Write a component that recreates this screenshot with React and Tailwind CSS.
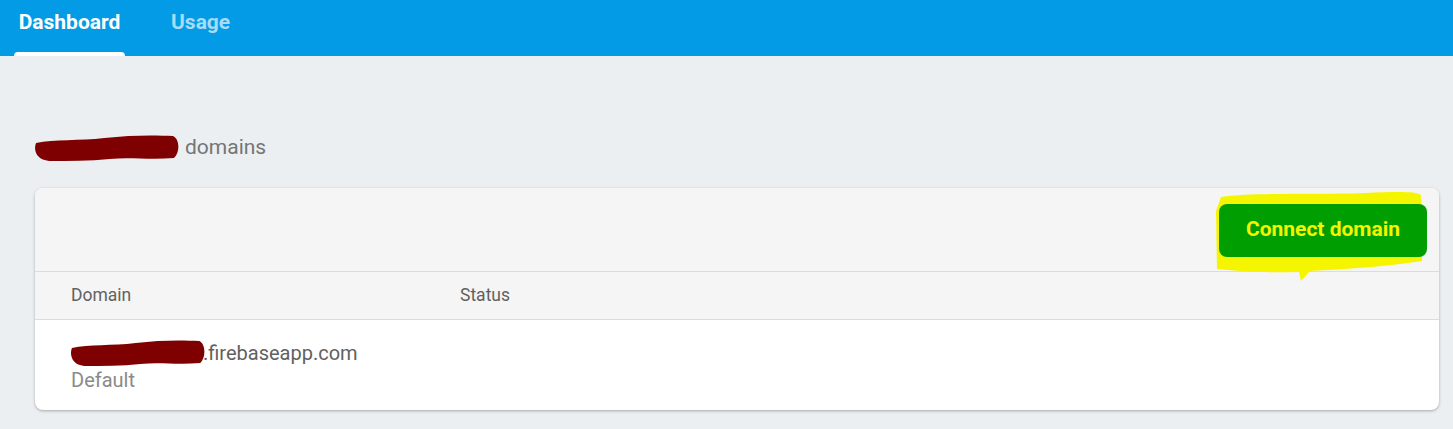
import React from 'react';

function Scribble({ className }) {
  return (
    <svg className={className} viewBox="0 0 144 26" preserveAspectRatio="none" aria-hidden="true">
      <path
        d="M2 8 C 20 4, 45 6, 70 3 C 95 0, 120 0, 138 1 C 145 4, 145 18, 139 23 C 115 25, 95 22, 75 24 C 55 26, 35 26, 15 26 C 3 25, -1 16, 2 8 Z"
        fill="#7f0000"
      />
    </svg>
  );
}

export default function App() {
  return (
    <div className="min-h-screen bg-[#eceff1] font-['Roboto',sans-serif]">
      <header className="flex h-14 items-end bg-[#039be5] px-[14px]">
        <div className="relative flex h-14 w-[111px] items-center justify-center">
          <span className="-mt-[11px] text-[21px] font-bold text-white">Dashboard</span>
          <div className="absolute bottom-0 left-0 h-1 w-full rounded-t bg-white" />
        </div>
        <div className="flex h-14 items-center pl-[46px]">
          <span className="-mt-[11px] text-[21px] font-bold text-[#a6dcf7]">Usage</span>
        </div>
      </header>

      <div className="pl-[34px] pt-[76px]">
        <div className="flex items-center">
          <Scribble className="h-[26px] w-[145px]" />
          <span className="ml-[6px] text-[21px] text-[#757575]">domains</span>
        </div>
      </div>

      <section className="ml-[35px] mr-[14px] mt-[24px] overflow-hidden rounded-lg bg-white shadow-[0_1px_3px_rgba(0,0,0,0.3)]">
        <div className="flex h-[84px] items-start justify-end border-b border-[#dcdcdc] bg-[#f5f5f5] pr-3 pt-4">
          <div className="relative">
            <svg className="absolute -left-[4px] -top-[13px] h-[92px] w-[210px]" viewBox="0 0 210 92" aria-hidden="true">
              <path
                d="M6 6 C 40 1, 100 4, 150 2 C 180 1, 200 0, 206 4 L 207 70 C 170 76, 130 78, 95 80 L 86 90 L 84 81 C 50 82, 20 80, 2 78 L 1 20 Z"
                fill="#f5f500"
              />
            </svg>
            <button className="relative flex h-[53px] w-[208px] items-center justify-center rounded-lg bg-[#009e00] text-[21px] font-bold text-[#f5f500]">
              Connect domain
            </button>
          </div>
        </div>
        <div className="flex h-[48px] items-center border-b border-[#dcdcdc] bg-[#f5f5f5] text-[17.5px] text-[#616161]">
          <div className="w-[425px] pl-9">Domain</div>
          <div>Status</div>
        </div>
        <div className="h-[90px] pl-9 pt-[18px]">
          <div className="flex items-center">
            <Scribble className="-ml-[1px] h-[26px] w-[135px]" />
            <span className="-ml-[2px] text-[20px] text-[#616161]">.firebaseapp.com</span>
          </div>
          <div className="text-[20px] leading-6 text-[#8a8a8a]">Default</div>
        </div>
      </section>
    </div>
  );
}
